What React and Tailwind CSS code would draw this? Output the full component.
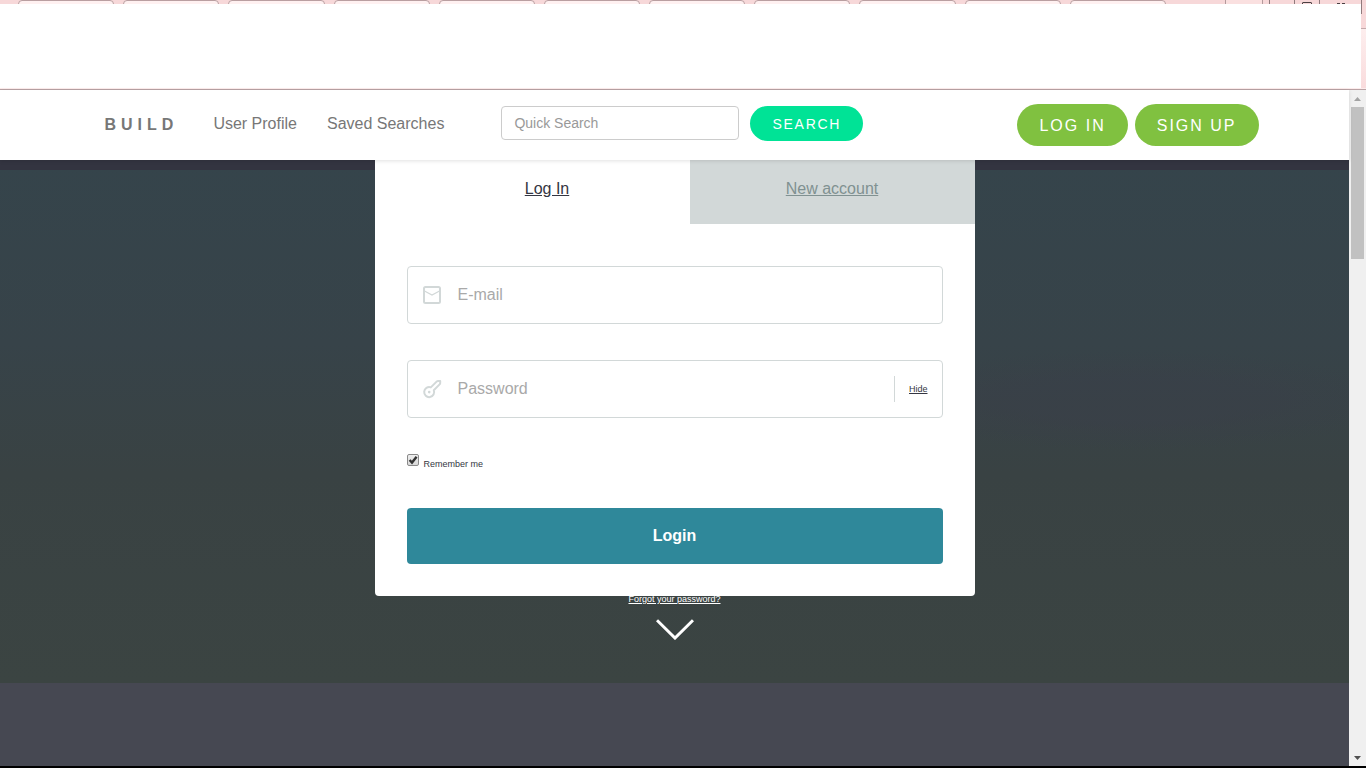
import { useState } from "react";

function WindowFrame() {
  return (
    <div aria-hidden="true" className="relative flex h-[90px] shrink-0 flex-col border-b border-[#baa3a5] bg-white">
      <div className="flex h-1 shrink-0 overflow-hidden bg-[#f7d8d9]">
        <div className="ml-[18px] grid w-[1157px] shrink-0 grid-cols-11">
          {Array.from({ length: 11 }, (_, i) => (
            <div key={i} className="pr-[9px]">
              <div className="h-4 rounded-t-[4px] border border-[#b99fa1] bg-[#fff1f1]" />
            </div>
          ))}
        </div>
        <div className="mr-1 ml-auto flex">
          <div className="mr-1.5 w-[38px] border-x border-[#b39a9c] bg-[#fae0e0]" />
          <div className="w-[25px] border-l border-[#8f7a7c]" />
          <div className="flex w-[25px] justify-center border-l border-[#8f7a7c] pt-0.5">
            <div className="h-3 w-[10px] shrink-0 rounded-t-[1px] border border-[#4a4042]" />
          </div>
          <div className="flex w-[43px] justify-center gap-0.5 border-x border-[#8f7a7c] pt-[3px]">
            <div className="h-px w-[3px] bg-[#4a4042]" />
            <div className="h-px w-[3px] bg-[#4a4042]" />
          </div>
        </div>
      </div>
      <div className="flex flex-1 flex-col self-end">
        <div className="h-[10px] w-[5px] border-l border-[#8f7a7c] bg-[#f7d8d9]" />
        <div className="h-[15px] w-[5px] border-b border-[#c4a9ab] bg-[#f7d8d9]" />
        <div className="w-[5px] flex-1 bg-linear-to-b from-[#fdeeee] to-[#f9dcdd]" />
      </div>
      <div className="h-px bg-[#fdecec]" />
    </div>
  );
}

const accountButton = "h-[42px] rounded-full bg-[#80c140] px-[22px] pt-0.5 tracking-[0.125em] text-white";

function Header() {
  return (
    <header className="relative z-20 bg-white shadow-[0_1px_4px_rgba(0,0,0,0.12)]">
      <div className="mx-auto flex h-[70px] max-w-[1170px] items-center pl-[15px] whitespace-nowrap">
        <a href="#" className="font-bold tracking-[5px] text-[#777]">BUILD</a>
        <nav className="ml-[35px] flex gap-[30px] pb-0.5 text-[#777]">
          <a href="#profile">User Profile</a>
          <a href="#saved">Saved Searches</a>
        </nav>
        <form className="ml-[57px] flex items-center gap-[11px] pb-1" onSubmit={(e) => e.preventDefault()}>
          <input
            type="text"
            aria-label="Quick Search"
            placeholder="Quick Search"
            className="h-[34px] w-[238px] rounded border border-[#ccc] px-3 text-sm text-[#555] outline-none placeholder:text-[#999]"
          />
          <button type="submit" className="mt-px h-[35px] rounded-full bg-[#00e396] px-[22px] text-sm font-medium tracking-[0.125em] text-white">
            SEARCH
          </button>
        </form>
        <div className="ml-auto flex gap-[7px] pr-px">
          <button type="button" className={accountButton}>LOG IN</button>
          <button type="button" className={accountButton}>SIGN UP</button>
        </div>
      </div>
    </header>
  );
}

function MailIcon() {
  return (
    <svg width="20" height="20" viewBox="0 0 20 20" fill="none" stroke="#d2d8d8" aria-hidden="true">
      <rect x="2" y="2" width="16" height="16" rx="1.5" strokeWidth="2" />
      <path d="M2.5 6 L10 10 L17.5 6" strokeWidth="1.2" />
    </svg>
  );
}

function KeyIcon() {
  return (
    <svg width="20" height="20" viewBox="0 0 20 20" fill="none" stroke="#d2d8d8" aria-hidden="true">
      <path d="M8.8 8.4 L14.6 2.6 Q15.2 2 16.2 2 H18.2 V4 Q18.2 4.8 17.6 5.4 L11.8 11.2 A5 5 0 1 1 8.8 8.4 Z" strokeWidth="2" strokeLinejoin="round" />
      <circle cx="7.2" cy="13.1" r="1.3" fill="#d2d8d8" stroke="none" />
    </svg>
  );
}

const fieldClass =
  "flex h-[58px] items-center rounded border border-[#d2d8d8] pl-3.5 focus-within:border-[#2f889a]";
const inputClass =
  "ml-4 h-full min-w-0 flex-1 bg-transparent text-base text-[#343642] outline-none placeholder:text-[#a9a9a9]";
const tabClass = "h-16 pt-[17px] underline";

function LoginCard() {
  const [visible, setVisible] = useState(true);
  const [remember, setRemember] = useState(true);
  return (
    <div className="relative z-10 rounded-b bg-white">
      <div className="grid grid-cols-2 pl-[30px] text-center">
        <a href="#login" className={`${tabClass} text-[#343642]`}>Log In</a>
        <a href="#signup" className={`${tabClass} bg-[#d2d8d8] text-[#809191]`}>New account</a>
      </div>
      <form className="px-8 pt-[42px] pb-8" onSubmit={(e) => e.preventDefault()}>
        <div className={fieldClass}>
          <MailIcon />
          <input type="email" aria-label="E-mail" placeholder="E-mail" className={inputClass} />
        </div>
        <div className={`${fieldClass} mt-9`}>
          <KeyIcon />
          <input type={visible ? "text" : "password"} aria-label="Password" placeholder="Password" className={inputClass} />
          <button
            type="button"
            onClick={() => setVisible(!visible)}
            className="h-[26px] border-l border-[#d2d8d8] px-[14px] pt-0.5 text-[9px] text-[#343642] underline"
          >
            {visible ? "Hide" : "Show"}
          </button>
        </div>
        <div className="mt-9 flex h-[18px] items-start">
          <span className="relative flex size-3">
            <input
              id="remember"
              type="checkbox"
              checked={remember}
              onChange={(e) => setRemember(e.target.checked)}
              className="size-3 appearance-none rounded-xs border border-[#8a8a8a] bg-linear-to-b from-[#eeeeee] to-[#d9d9d9]"
            />
            {remember && (
              <svg className="pointer-events-none absolute inset-0" width="12" height="12" viewBox="0 0 12 12" fill="none" stroke="#333" strokeWidth="2.4" aria-hidden="true">
                <path d="M2.6 6 L5 8.6 L9.6 2.8" />
              </svg>
            )}
          </span>
          <label htmlFor="remember" className="ml-[5px] pt-1 text-[9px] leading-3 text-[#343642]">Remember me</label>
        </div>
        <button type="submit" className="mt-9 h-14 w-full rounded bg-[#2f889a] font-bold text-white">Login</button>
      </form>
    </div>
  );
}

const arrowButton = "flex h-[17px] w-full items-center justify-center";

function ScrollBar() {
  return (
    <div aria-hidden="true" className="flex w-[17px] shrink-0 flex-col bg-[#f0f0f0]">
      <div className={arrowButton}>
        <svg width="7" height="4" viewBox="0 0 7 4" fill="#a3a3a3"><path d="M0 4 L3.5 0 L7 4 Z" /></svg>
      </div>
      <div className="mx-0.5 h-[152px] bg-[#c1c1c1]" />
      <div className={`${arrowButton} mt-auto`}>
        <svg width="7" height="4" viewBox="0 0 7 4" fill="#505050"><path d="M0 0 L3.5 4 L7 0 Z" /></svg>
      </div>
    </div>
  );
}

export default function App() {
  return (
    <div className="flex min-h-screen flex-col border-b-2 border-black bg-[#464852] font-['Liberation_Sans',Arial,sans-serif] text-base">
      <WindowFrame />
      <div className="flex flex-1">
        <div className="min-w-0 flex-1">
          <Header />
          <main>
            <section className="bg-[linear-gradient(#333440_10px,transparent_10px),radial-gradient(ellipse_270px_50px_at_84%_46%,rgba(58,62,73,0.5)_40%,transparent),linear-gradient(#35444b,#374349_35%,#394243_60%,#3b4442)] pb-[43px]">
              <div className="mx-auto max-w-[600px]">
                <LoginCard />
                <p className="-mt-[3px] text-center text-[9px] leading-3 text-white">
                  <a href="#reset" className="underline">Forgot your password?</a>
                </p>
                <a href="#more" aria-label="Scroll down" className="mt-3.5 flex justify-center">
                  <svg width="38" height="21" viewBox="0 0 38 21" fill="none" stroke="#fff" strokeWidth="3" aria-hidden="true">
                    <path d="M1 1.2 L19 19 L37 1.2" />
                  </svg>
                </a>
              </div>
            </section>
          </main>
        </div>
        <ScrollBar />
      </div>
    </div>
  );
}
